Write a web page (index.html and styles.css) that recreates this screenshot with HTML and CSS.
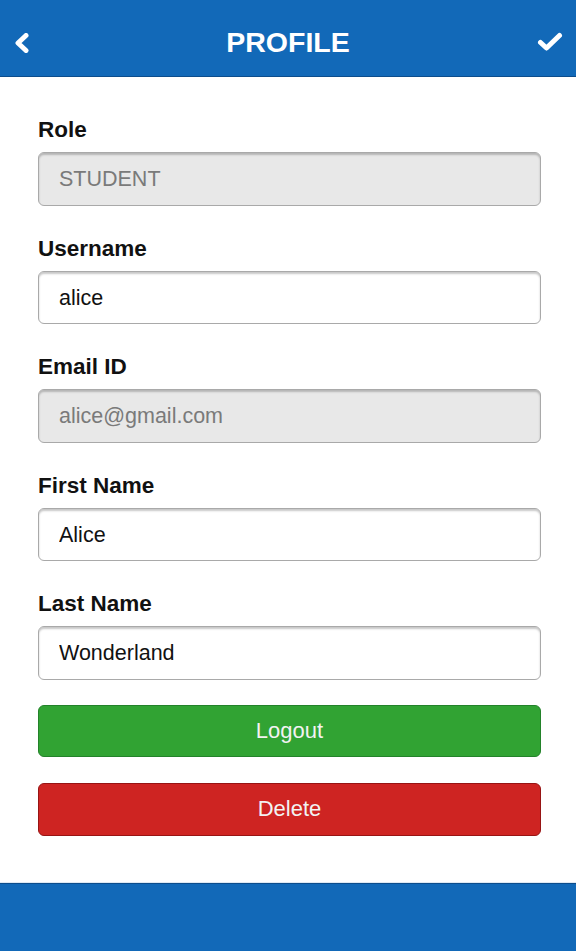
FILE: index.html
```html
<!DOCTYPE html>
<html lang="en">
<head>
<meta charset="utf-8">
<title>Profile</title>
<link rel="stylesheet" href="styles.css">
</head>
<body>
<div class="app">
  <header class="topbar">
    <button class="icon-btn back" aria-label="Back">
      <svg width="18" height="20" viewBox="0 0 18 20"><polyline points="13,2.5 5,10 13,17.5" fill="none" stroke="#fff" stroke-width="5" stroke-linejoin="round" stroke-linecap="round"/></svg>
    </button>
    <h1 class="title">PROFILE</h1>
    <button class="icon-btn save" aria-label="Save">
      <svg width="26" height="20" viewBox="0 0 26 20"><polyline points="3.5,10.5 9.5,16 22.5,3.5" fill="none" stroke="#fff" stroke-width="5" stroke-linejoin="round" stroke-linecap="round"/></svg>
    </button>
  </header>
  <main class="content">
    <div class="field">
      <label class="label">Role</label>
      <input class="input disabled" value="STUDENT" readonly>
    </div>
    <div class="field">
      <label class="label">Username</label>
      <input class="input" value="alice">
    </div>
    <div class="field">
      <label class="label">Email ID</label>
      <input class="input disabled" value="alice@gmail.com" readonly>
    </div>
    <div class="field">
      <label class="label">First Name</label>
      <input class="input" value="Alice">
    </div>
    <div class="field field-last">
      <label class="label">Last Name</label>
      <input class="input" value="Wonderland">
    </div>
    <div class="actions">
      <button class="btn btn-green">Logout</button>
      <button class="btn btn-red">Delete</button>
    </div>
  </main>
  <footer class="bottombar"></footer>
</div>
</body>
</html>
```

FILE: styles.css
```css
* { box-sizing: border-box; }
html, body { margin: 0; padding: 0; }
body {
  font-family: "Liberation Sans", Arial, Helvetica, sans-serif;
  background: #fff;
  color: #111;
}
.app {
  display: flex;
  flex-direction: column;
  height: 951px;
  width: 576px;
}
.topbar {
  height: 77px;
  flex: 0 0 77px;
  background: #1269b8;
  border-bottom: 1px solid #0c4d8c;
  display: flex;
  align-items: center;
  justify-content: space-between;
  padding: 9px 13px 0 13px;
}
.icon-btn {
  background: none;
  border: 0;
  padding: 0;
  margin: 0;
  width: 30px;
  height: 30px;
  display: flex;
  align-items: center;
  justify-content: center;
}
.back { justify-content: flex-start; }
.save { justify-content: flex-end; margin-top: -2px; }
.title {
  margin: 0;
  font-size: 28.5px;
  font-weight: bold;
  color: #fff;
}
.content {
  flex: 1;
  padding: 41px 35px 0 38px;
  display: flex;
  flex-direction: column;
}
.field {
  display: flex;
  flex-direction: column;
  margin-bottom: 31px;
}
.field.field-last { margin-bottom: 25px; }
.label {
  font-size: 22.5px;
  line-height: 24px;
  font-weight: bold;
  color: #111;
  margin-bottom: 10px;
}
.input {
  height: 53.5px;
  width: 100%;
  border: 1px solid #a9a9a9;
  border-radius: 6px;
  box-shadow: inset 0 2px 2px rgba(0,0,0,0.22);
  padding: 2px 20px 0;
  font-family: "Liberation Sans", Arial, Helvetica, sans-serif;
  font-size: 21.5px;
  color: #111;
  background: #fff;
  outline: none;
}
.input.disabled {
  background: #e8e8e8;
  color: #7a7a7a;
}
.actions {
  display: flex;
  flex-direction: column;
  gap: 26px;
}
.btn {
  height: 52.5px;
  width: 100%;
  border-radius: 6px;
  font-family: "Liberation Sans", Arial, Helvetica, sans-serif;
  font-size: 22px;
  color: #f2f2f2;
  padding: 0;
}
.btn-green {
  background: #31a333;
  border: 1px solid #23822a;
}
.btn-red {
  background: #ce2422;
  border: 1px solid #971414;
}
.bottombar {
  height: 68px;
  flex: 0 0 68px;
  background: #1269b8;
  border-top: 1px solid #0c4d8c;
  box-shadow: 0 -1px 0 #dfe9f3;
}
```
